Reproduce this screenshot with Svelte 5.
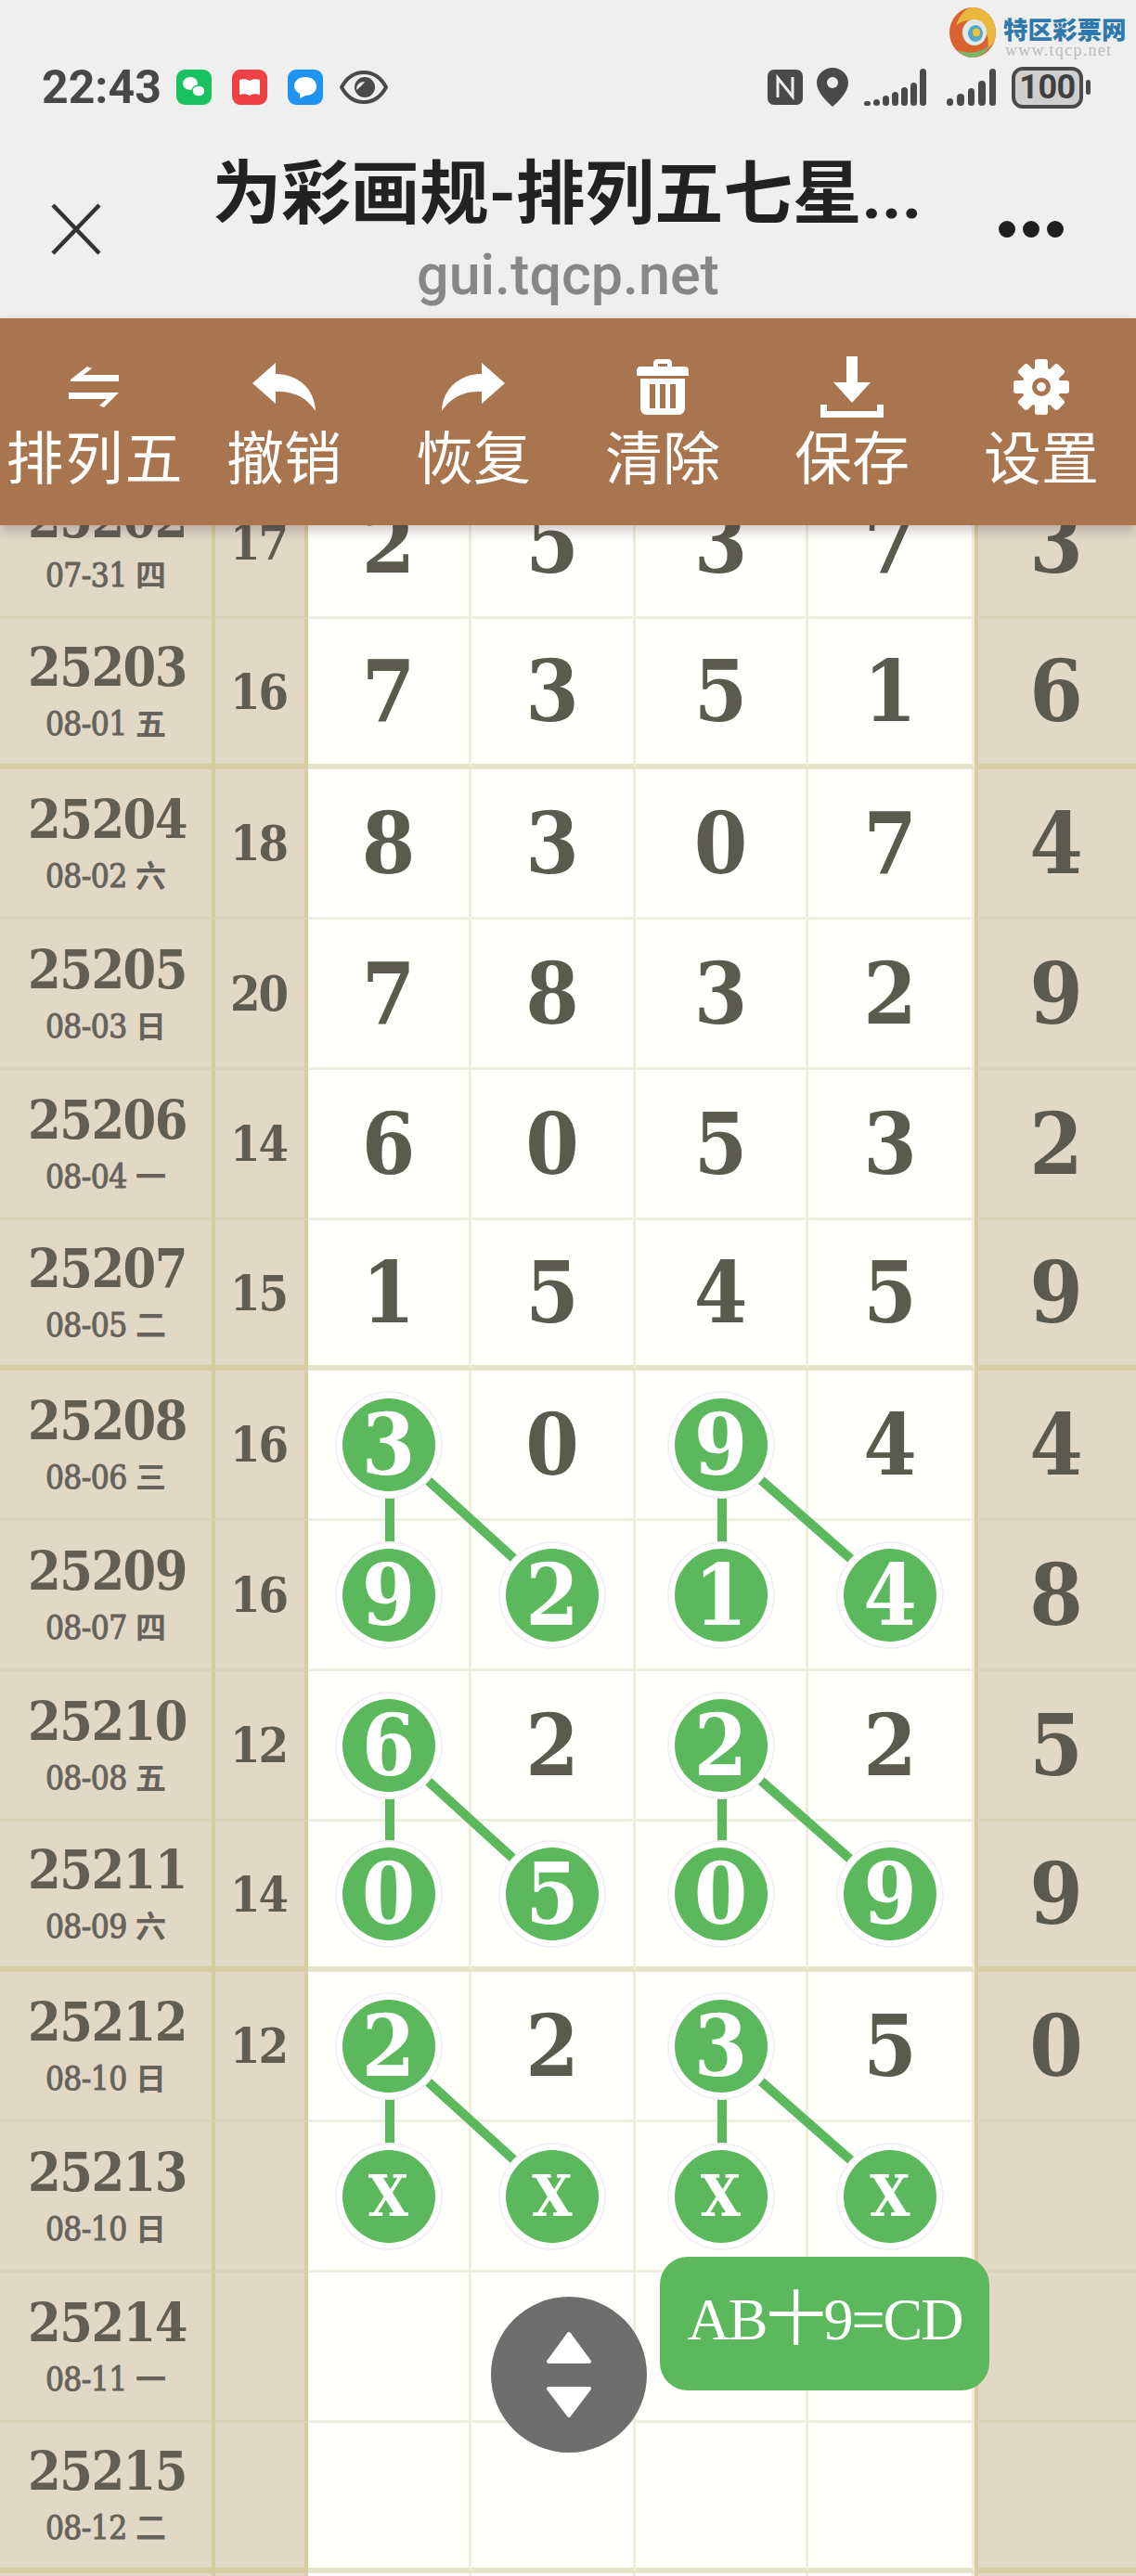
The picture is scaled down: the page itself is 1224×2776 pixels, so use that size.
<script lang="ts">
  const rowH = 162;
  const colX = [420, 596, 778, 960];

  const rows = [
    { no: "25202", date: "07-31", wd: "四", sum: "17", nums: ["2", "5", "3", "7"], last: "3", hit: [] },
    { no: "25203", date: "08-01", wd: "五", sum: "16", nums: ["7", "3", "5", "1"], last: "6", hit: [], sep: true },
    { no: "25204", date: "08-02", wd: "六", sum: "18", nums: ["8", "3", "0", "7"], last: "4", hit: [] },
    { no: "25205", date: "08-03", wd: "日", sum: "20", nums: ["7", "8", "3", "2"], last: "9", hit: [] },
    { no: "25206", date: "08-04", wd: "一", sum: "14", nums: ["6", "0", "5", "3"], last: "2", hit: [] },
    { no: "25207", date: "08-05", wd: "二", sum: "15", nums: ["1", "5", "4", "5"], last: "9", hit: [], sep: true },
    { no: "25208", date: "08-06", wd: "三", sum: "16", nums: ["3", "0", "9", "4"], last: "4", hit: [0, 2], head: true },
    { no: "25209", date: "08-07", wd: "四", sum: "16", nums: ["9", "2", "1", "4"], last: "8", hit: [0, 1, 2, 3] },
    { no: "25210", date: "08-08", wd: "五", sum: "12", nums: ["6", "2", "2", "2"], last: "5", hit: [0, 2], head: true },
    { no: "25211", date: "08-09", wd: "六", sum: "14", nums: ["0", "5", "0", "9"], last: "9", hit: [0, 1, 2, 3], sep: true },
    { no: "25212", date: "08-10", wd: "日", sum: "12", nums: ["2", "2", "3", "5"], last: "0", hit: [0, 2], head: true },
    { no: "25213", date: "08-10", wd: "日", sum: "", nums: ["X", "X", "X", "X"], last: "", hit: [0, 1, 2, 3] },
    { no: "25214", date: "08-11", wd: "一", sum: "", nums: ["", "", "", ""], last: "", hit: [] },
    { no: "25215", date: "08-12", wd: "二", sum: "", nums: ["", "", "", ""], last: "", hit: [], sep: true },
    { no: "", date: "", wd: "", sum: "", nums: ["", "", "", ""], last: "", hit: [] }
  ];

  // connector lines between a marked row and the one below it
  const links = [];
  rows.forEach((r, i) => {
    if (!r.head) return;
    const y1 = i * rowH + rowH / 2;
    const y2 = y1 + rowH - 2;
    for (const c of [0, 2]) {
      links.push({ x1: colX[c], y1, x2: colX[c], y2 });
      links.push({ x1: colX[c], y1, x2: colX[c + 1], y2 });
    }
  });

  const tools = ["排列五", "撤销", "恢复", "清除", "保存", "设置"];
  const teeth = [0, 45, 90, 135];
  const bars1 = [5, 7, 11, 15, 20, 25, 40];
  const bars2 = [8, 13, 19, 27, 40];
</script>

<div class="page">
  <header class="head">
    <div class="mark">
      <svg class="swirl" viewBox="0 0 50 54" width="50" height="54">
        <ellipse cx="25" cy="27" rx="25" ry="27" fill="#d9622f" />
        <path d="M25 0a25 27 0 0 1 25 27c0 8-4 14-9 18 3-12-2-26-16-30-8-2-14 1-18 5 3-10 10-20 18-20z" fill="#e9b83c" />
        <path d="M44 40c-4 9-12 14-19 14-6 0-12-3-16-8 10 4 24 4 35-6z" fill="#7fb56b" />
        <ellipse cx="27" cy="27" rx="13" ry="14" fill="#dfe9ea" />
        <ellipse cx="28" cy="28" rx="8" ry="9" fill="#57a7c4" />
        <ellipse cx="29" cy="27" rx="4" ry="4.5" fill="#f0c23c" />
      </svg>
      <div class="mark-text">
        <div class="mark-cn">特区彩票网</div>
        <div class="mark-en">www.tqcp.net</div>
      </div>
    </div>

    <div class="status">
      <span class="time">22:43</span>
      <span class="app green">
        <svg viewBox="0 0 38 38" width="38" height="38"><ellipse cx="15" cy="15" rx="8" ry="7" fill="#fff" /><ellipse cx="24" cy="23" rx="7" ry="6" fill="#fff" stroke="#19c160" stroke-width="1.5" /></svg>
      </span>
      <span class="app red">
        <svg viewBox="0 0 38 38" width="38" height="38"><path d="M8 11c4-1 8-1 11 1 3-2 7-2 11-1v16c-4-1-8-1-11 1-3-2-7-2-11-1z" fill="#fff" /></svg>
      </span>
      <span class="app blue">
        <svg viewBox="0 0 38 38" width="38" height="38"><path d="M19 8c7 0 12 4 12 10s-5 10-12 10l-6 3v-5c-4-2-6-5-6-8 0-6 5-10 12-10z" fill="#fff" /></svg>
      </span>
      <svg class="eye" viewBox="0 0 52 36" width="52" height="36">
        <path d="M2 18C8 7 16 2 26 2s18 5 24 16c-6 11-14 16-24 16S8 29 2 18z" fill="none" stroke="#4a4a4a" stroke-width="4" />
        <circle cx="27" cy="18" r="11" fill="#4a4a4a" />
        <path d="M18 21c0-6 4-9 9-9-2 3-5 6-9 9z" fill="#efefef" />
      </svg>
      <span class="spring"></span>
      <svg class="nfc" viewBox="0 0 38 38" width="38" height="38">
        <rect width="38" height="38" rx="7" fill="#4a4a4a" />
        <path d="M11 30V9l16 20V8" fill="none" stroke="#efefef" stroke-width="3" />
      </svg>
      <svg class="pin" viewBox="0 0 34 42" width="34" height="42">
        <path d="M17 0c9 0 17 7 17 16 0 10-10 20-17 26C10 36 0 26 0 16 0 7 8 0 17 0z" fill="#4a4a4a" />
        <circle cx="17" cy="16" r="6" fill="#efefef" />
      </svg>
      <span class="bars one">
        {#each bars1 as h}<i style="height:{h}px"></i>{/each}
      </span>
      <span class="bars two">
        {#each bars2 as h}<i style="height:{h}px"></i>{/each}
      </span>
      <span class="batt"><b>100</b></span>
      <span class="tip"></span>
    </div>

    <div class="titlebar">
      <svg class="close" viewBox="0 0 54 56" width="54" height="56">
        <path d="M2 2l50 52M52 2L2 54" fill="none" stroke="#333" stroke-width="4.5" />
      </svg>
      <div class="titles">
        <div class="title">为彩画规-排列五七星...</div>
        <div class="url">gui.tqcp.net</div>
      </div>
      <div class="more"><i></i><i></i><i></i></div>
    </div>
  </header>

  <nav class="tools">
    {#each tools as t, i}
      <div class="tool">
        <span class="ico">
          {#if i === 0}
            <svg viewBox="0 0 56 44" width="56" height="44"><path d="M2 14L20 0l5 2-9 7h38v7H2zM0 28h54L38 44l-5-2 8-7H0z" fill="#fff" /></svg>
          {:else if i === 1}
            <svg viewBox="0 0 68 52" width="68" height="52"><path d="M0 22L25 0v12c24 0 42 16 43 40-9-14-23-22-43-21v13z" fill="#fff" /></svg>
          {:else if i === 2}
            <svg viewBox="0 0 68 52" width="68" height="52"><path d="M68 22L43 0v12C19 12 1 28 0 52c9-14 23-22 43-21v13z" fill="#fff" /></svg>
          {:else if i === 3}
            <svg viewBox="0 0 56 60" width="56" height="60">
              <path d="M18 8V4c0-2 2-4 4-4h12c2 0 4 2 4 4v4h14c2 0 4 2 4 4v6H0v-6c0-2 2-4 4-4zm5 0h10V5H23z" fill="#fff" />
              <path d="M4 21h48v32c0 4-3 7-7 7H11c-4 0-7-3-7-7zm10 6v26h6V27zm11 0v26h6V27zm11 0v26h6V27z" fill="#fff" fill-rule="evenodd" />
            </svg>
          {:else if i === 4}
            <svg viewBox="0 0 68 66" width="68" height="66"><path d="M28 0h12v28h14L34 50 14 28h14zM0 52h7v7h54v-7h7v14H0z" fill="#fff" /></svg>
          {:else}
            <svg viewBox="0 0 60 60" width="60" height="60">
              {#each teeth as a}
                <rect x="23" y="0" width="14" height="60" rx="3" fill="#fff" transform="rotate({a} 30 30)" />
              {/each}
              <circle cx="30" cy="30" r="21" fill="#fff" />
              <circle cx="30" cy="30" r="10" fill="#a8754f" />
              <circle cx="30" cy="30" r="5" fill="#fff" />
            </svg>
          {/if}
        </span>
        <span class="label">{t}</span>
      </div>
    {/each}
  </nav>

  <main class="scroller">
    <div class="table">
      <svg class="links" width="1224" height={rows.length * rowH}>
        {#each links as l}
          <line x1={l.x1} y1={l.y1} x2={l.x2} y2={l.y2} stroke="#5cb85c" stroke-width="10" />
        {/each}
      </svg>
      {#each rows as r}
        <div class="row" class:sep={r.sep}>
          <div class="cell side issue">
            <div class="no">{r.no}</div>
            <div class="date">{r.date} <span class="wd">{r.wd}</span></div>
          </div>
          <div class="cell side sum">{r.sum}</div>
          {#each r.nums as n, c}
            <div class="cell num">
              {#if r.hit.includes(c)}
                <span class="ball" class:mark-x={n === "X"}>{n}</span>
              {:else}
                {n}
              {/if}
            </div>
          {/each}
          <div class="cell side num lastcol">{r.last}</div>
        </div>
      {/each}
    </div>

    <div class="updown">
      <svg viewBox="-3 -3 56 98" width="56" height="98"><path d="M25 2l22 30H3zM3 61h44L25 90z" fill="#fff" stroke="#fff" stroke-width="4" stroke-linejoin="round" /></svg>
    </div>
    <div class="formula">AB十9=CD</div>
  </main>
</div>

<style>
  :global(body) {
    margin: 0;
    background: #fff;
  }

  .page {
    width: 1224px;
    height: 2776px;
    display: flex;
    flex-direction: column;
    overflow: hidden;
    font-family: "DejaVu Serif", "Noto Sans CJK SC", serif;
  }

  .head {
    height: 343px;
    flex: none;
    background: #efefef;
    position: relative;
    font-family: Roboto, "Noto Sans CJK SC", sans-serif;
  }

  .mark {
    position: absolute;
    top: 8px;
    left: 1023px;
    display: flex;
    gap: 8px;
  }

  .swirl {
    display: block;
  }

  .mark-cn {
    margin-top: 9px;
    font: 900 26.5px/28px "Noto Sans CJK SC", sans-serif;
    color: #2f78ac;
    white-space: nowrap;
  }

  .mark-en {
    font: 400 18px/16px "Liberation Serif", serif;
    color: #b9bcbf;
    letter-spacing: 1.3px;
    margin: 1px 0 0 2px;
    white-space: nowrap;
  }

  .status {
    height: 50px;
    padding: 69px 49px 0 45px;
    display: flex;
    align-items: center;
    color: #474747;
  }

  .time {
    font-size: 50px;
    font-weight: 700;
    line-height: 50px;
    width: 145px;
  }

  .app {
    width: 38px;
    height: 38px;
    border-radius: 9px;
    margin-right: 22px;
    display: block;
  }

  .app svg {
    display: block;
  }

  .green { background: #19c160; }
  .red { background: #ee4146; }
  .blue { background: #1e93f2; }

  .eye {
    margin-left: -4px;
  }

  .spring {
    flex: 1;
  }

  .nfc {
    margin-right: 15px;
  }

  .bars {
    display: flex;
    align-items: flex-end;
    height: 40px;
    gap: 3px;
    margin: 0 0 0 17px;
  }

  .bars i {
    width: 7.5px;
    background: #4a4a4a;
    border-radius: 4px;
  }

  .bars.one i {
    width: 7px;
  }

  .bars.two {
    margin-left: 22px;
    gap: 4px;
  }

  .batt {
    width: 77px;
    height: 45px;
    box-sizing: border-box;
    margin-left: 17px;
    border: 4px solid #4a4a4a;
    border-radius: 12px;
    background: #cfcfcf;
    display: flex;
    align-items: center;
    justify-content: center;
  }

  .batt b {
    font-size: 36px;
    font-weight: 700;
    color: #3f3f3f;
    line-height: 1;
    letter-spacing: -0.5px;
  }

  .tip {
    width: 5px;
    height: 16px;
    margin-left: 3px;
    background: #4a4a4a;
    border-radius: 3px;
  }

  .titlebar {
    display: flex;
    padding-left: 55px;
    padding-top: 30px;
    position: relative;
  }

  .close {
    margin-top: 70px;
    flex: none;
  }

  .titles {
    position: absolute;
    left: 0;
    right: 0;
    top: 55px;
    text-align: center;
  }

  .title {
    font: 700 74.5px/72px Roboto, "Noto Sans CJK SC", sans-serif;
    color: #222;
    margin-left: -2px;
    white-space: nowrap;
  }

  .url {
    font: 500 61px/64px Roboto, sans-serif;
    color: #878787;
    margin-top: 18px;
  }

  .more {
    position: absolute;
    top: 119px;
    left: 1076px;
    display: flex;
    gap: 8px;
  }

  .more i {
    width: 18px;
    height: 18px;
    border-radius: 50%;
    background: #1f1f1f;
  }

  .tools {
    flex: none;
    height: 223px;
    background: #a8754f;
    display: grid;
    grid-template-columns: repeat(6, 204px);
    position: relative;
    z-index: 5;
    box-shadow: 0 6px 12px rgba(60, 40, 60, 0.25);
    font-family: "Noto Sans CJK SC", sans-serif;
    color: #fff;
  }

  .tool {
    display: flex;
    flex-direction: column;
    align-items: center;
    height: 100%;
  }

  .ico {
    height: 70px;
    margin-top: 39px;
    display: flex;
    align-items: center;
    justify-content: center;
  }

  .ico svg {
    display: block;
  }

  .label {
    font-size: 62px;
    line-height: 70px;
    margin-top: 3px;
    white-space: nowrap;
  }

  .tool:first-child .label {
    letter-spacing: 2px;
    margin-left: 1px;
  }

  .scroller {
    flex: 1;
    position: relative;
    overflow: hidden;
  }

  .table {
    margin-top: -61px;
    position: relative;
  }

  .links {
    position: absolute;
    left: 0;
    top: 0;
    z-index: 1;
  }

  .row {
    height: 162px;
    display: grid;
    grid-template-columns: 232px 100px 176px 177px 186px 179px 174px;
  }

  .cell {
    box-sizing: border-box;
    background: #fffffc;
    border-right: 3px solid #eeeeda;
    border-bottom: 3px solid #efefdf;
    display: flex;
    align-items: center;
    justify-content: center;
    color: #5b5a4e;
  }

  .row.sep .cell {
    border-bottom: 6px solid #e2e3c9;
  }

  .num {
    font-size: 92px;
    font-weight: 700;
    font-stretch: condensed;
    line-height: 1;
  }

  .side {
    background: #e2d8c6;
    border-bottom-color: #dcd2ba;
    border-right: 4px solid #d5cc9f;
  }

  .row.sep .side {
    border-bottom-color: #d6cda4;
  }

  .issue {
    flex-direction: column;
    color: #615e52;
  }

  .no {
    font-size: 57px;
    font-weight: 700;
    font-stretch: condensed;
    line-height: 58px;
    letter-spacing: -1.5px;
    margin-top: 1px;
    padding-left: 3px;
  }

  .date {
    font-size: 35px;
    font-weight: 400;
    font-stretch: condensed;
    line-height: 42px;
    letter-spacing: -0.6px;
    margin-top: 9px;
    white-space: nowrap;
    color: #66635a;
    -webkit-text-stroke: 1px #66635a;
  }

  .wd {
    font-family: "Noto Sans CJK SC", sans-serif;
    font-weight: 700;
    font-size: 33px;
    letter-spacing: 0;
    -webkit-text-stroke: 0;
  }

  .sum {
    font-size: 52px;
    font-weight: 700;
    font-stretch: condensed;
    letter-spacing: -2px;
    color: #5f5c50;
    padding-right: 3px;
  }

  .lastcol {
    border-right: 0;
    border-left: 4px solid #d5cc9f;
    padding-right: 2px;
  }

  .ball {
    position: relative;
    z-index: 2;
    width: 100px;
    height: 100px;
    border-radius: 50%;
    background: #5cb85c;
    color: #fff;
    display: flex;
    align-items: center;
    justify-content: center;
    box-shadow: 0 0 0 6px #fff, 0 0 0 8px #f6eef6;
  }

  .mark-x {
    font-size: 62px;
  }

  .updown {
    position: absolute;
    z-index: 6;
    left: 529px;
    top: 1909px;
    width: 168px;
    height: 168px;
    border-radius: 50%;
    background: #6e6e6e;
    display: flex;
    align-items: center;
    justify-content: center;
  }

  .formula {
    position: absolute;
    z-index: 6;
    left: 711px;
    top: 1866px;
    width: 355px;
    height: 144px;
    box-sizing: border-box;
    padding-bottom: 8px;
    border-radius: 30px;
    background: #5cb85c;
    color: #fff;
    font: 400 64px/1 "Liberation Serif", "Noto Sans CJK SC", serif;
    letter-spacing: -2px;
    display: flex;
    align-items: center;
    justify-content: center;
    white-space: nowrap;
  }
</style>
